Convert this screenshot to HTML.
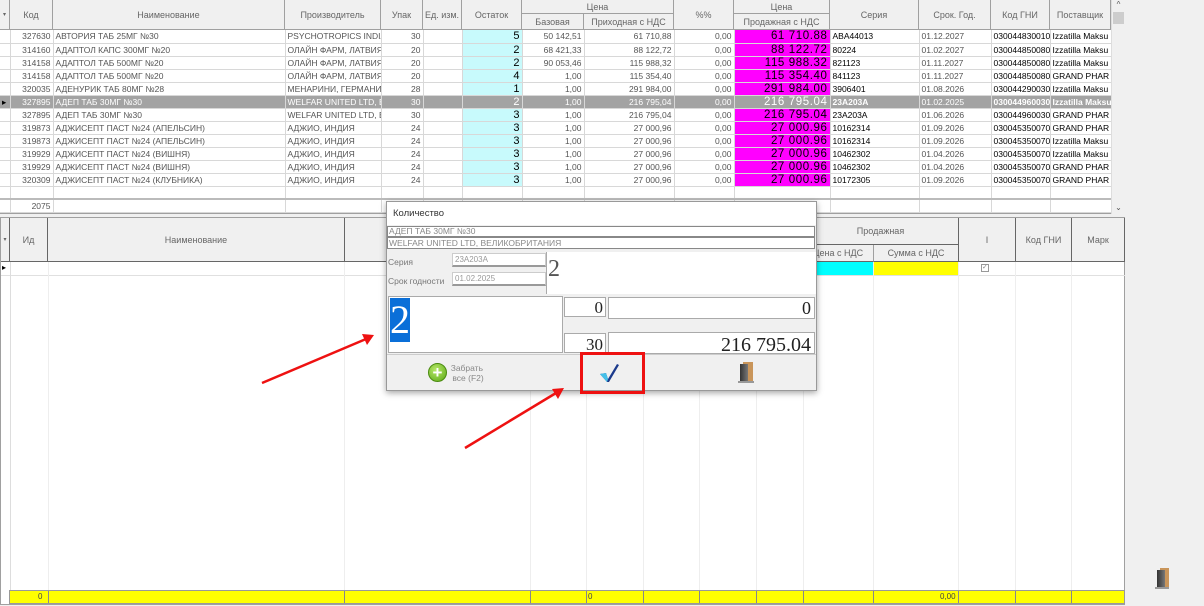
<!DOCTYPE html>
<html><head><meta charset="utf-8"><style>
*{margin:0;padding:0;box-sizing:border-box}
body{width:1204px;height:606px;overflow:hidden;background:#f0f0f0;font-family:"Liberation Sans",sans-serif;font-size:9px;color:#555;position:relative}
.a{position:absolute}
.h{position:absolute;background:#f0f0f0;border-right:1px solid #a0a0a0;border-bottom:1px solid #a0a0a0;display:flex;align-items:center;justify-content:center;color:#666;font-size:9px}
table{border-collapse:collapse;position:absolute;table-layout:fixed}
td{border-right:1px solid #d8d8d8;border-bottom:1px solid #d8d8d8;height:13px;padding:0 2px;white-space:nowrap;overflow:hidden;font-size:8.5px;color:#555;line-height:12px}
td.r{text-align:right}
td.q{background:#c8fafc;text-align:right;color:#000;font-size:11px}
td.m{background:#ff00ff;text-align:right;color:#000;font-size:11.5px;letter-spacing:0.6px}
td.b{color:#000;font-size:8.5px;text-overflow:clip}
tr.s td{background:#a3a3a3;color:#fff}
tr.s td.b{font-weight:bold}
</style></head><body>
<div class="a" style="left:0;top:0;width:1111px;height:214px;background:#fff;border-bottom:2px solid #a0a0a0"></div>
<div class="h" style="left:0;top:0;width:10px;height:30px;font-size:6px">▾</div>
<div class="h" style="left:10px;top:0;width:43px;height:30px">Код</div>
<div class="h" style="left:53px;top:0;width:232px;height:30px">Наименование</div>
<div class="h" style="left:285px;top:0;width:96px;height:30px">Производитель</div>
<div class="h" style="left:381px;top:0;width:42px;height:30px">Упак</div>
<div class="h" style="left:423px;top:0;width:39px;height:30px">Ед. изм.</div>
<div class="h" style="left:462px;top:0;width:60px;height:30px">Остаток</div>
<div class="h" style="left:522px;top:0;width:152px;height:14px">Цена</div>
<div class="h" style="left:522px;top:14px;width:62px;height:16px">Базовая</div>
<div class="h" style="left:584px;top:14px;width:90px;height:16px">Приходная с НДС</div>
<div class="h" style="left:674px;top:0;width:60px;height:30px">%%</div>
<div class="h" style="left:734px;top:0;width:96px;height:14px">Цена</div>
<div class="h" style="left:734px;top:14px;width:96px;height:16px">Продажная с НДС</div>
<div class="h" style="left:830px;top:0;width:89px;height:30px">Серия</div>
<div class="h" style="left:919px;top:0;width:72px;height:30px">Срок. Год.</div>
<div class="h" style="left:991px;top:0;width:59px;height:30px">Код ГНИ</div>
<div class="h" style="left:1050px;top:0;width:61px;height:30px">Поставщик</div>
<table style="left:0;top:30px;width:1111px">
<colgroup><col style="width:10px"><col style="width:43px"><col style="width:232px"><col style="width:96px"><col style="width:42px"><col style="width:39px"><col style="width:60px"><col style="width:62px"><col style="width:90px"><col style="width:60px"><col style="width:96px"><col style="width:89px"><col style="width:72px"><col style="width:59px"><col style="width:61px"></colgroup>
<tr><td></td><td class="r">327630</td><td>АВТОРИЯ ТАБ 25МГ №30</td><td>PSYCHOTROPICS INDIA</td><td class="r">30</td><td></td><td class="q">5</td><td class="r">50 142,51</td><td class="r">61 710,88</td><td class="r">0,00</td><td class="m">61 710.88</td><td class="b">ABA44013</td><td>01.12.2027</td><td class="b">030044830010</td><td class="b">Izzatilla Maksu</td></tr>
<tr><td></td><td class="r">314160</td><td>АДАПТОЛ КАПС 300МГ №20</td><td>ОЛАЙН ФАРМ, ЛАТВИЯ</td><td class="r">20</td><td></td><td class="q">2</td><td class="r">68 421,33</td><td class="r">88 122,72</td><td class="r">0,00</td><td class="m">88 122.72</td><td class="b">80224</td><td>01.02.2027</td><td class="b">030044850080</td><td class="b">Izzatilla Maksu</td></tr>
<tr><td></td><td class="r">314158</td><td>АДАПТОЛ ТАБ 500МГ №20</td><td>ОЛАЙН ФАРМ, ЛАТВИЯ</td><td class="r">20</td><td></td><td class="q">2</td><td class="r">90 053,46</td><td class="r">115 988,32</td><td class="r">0,00</td><td class="m">115 988.32</td><td class="b">821123</td><td>01.11.2027</td><td class="b">030044850080</td><td class="b">Izzatilla Maksu</td></tr>
<tr><td></td><td class="r">314158</td><td>АДАПТОЛ ТАБ 500МГ №20</td><td>ОЛАЙН ФАРМ, ЛАТВИЯ</td><td class="r">20</td><td></td><td class="q">4</td><td class="r">1,00</td><td class="r">115 354,40</td><td class="r">0,00</td><td class="m">115 354.40</td><td class="b">841123</td><td>01.11.2027</td><td class="b">030044850080</td><td class="b">GRAND PHAR</td></tr>
<tr><td></td><td class="r">320035</td><td>АДЕНУРИК ТАБ 80МГ №28</td><td>МЕНАРИНИ, ГЕРМАНИЯ</td><td class="r">28</td><td></td><td class="q">1</td><td class="r">1,00</td><td class="r">291 984,00</td><td class="r">0,00</td><td class="m">291 984.00</td><td class="b">3906401</td><td>01.08.2026</td><td class="b">030044290030</td><td class="b">Izzatilla Maksu</td></tr>
<tr class="s"><td style="color:#000">▸</td><td class="r">327895</td><td>АДЕП ТАБ 30МГ №30</td><td>WELFAR UNITED LTD, E</td><td class="r">30</td><td></td><td class="q">2</td><td class="r">1,00</td><td class="r">216 795,04</td><td class="r">0,00</td><td class="m" style="color:#fff">216 795.04</td><td class="b">23A203A</td><td>01.02.2025</td><td class="b">030044960030</td><td class="b">Izzatilla Maksu</td></tr>
<tr><td></td><td class="r">327895</td><td>АДЕП ТАБ 30МГ №30</td><td>WELFAR UNITED LTD, E</td><td class="r">30</td><td></td><td class="q">3</td><td class="r">1,00</td><td class="r">216 795,04</td><td class="r">0,00</td><td class="m">216 795.04</td><td class="b">23A203A</td><td>01.06.2026</td><td class="b">030044960030</td><td class="b">GRAND PHAR</td></tr>
<tr><td></td><td class="r">319873</td><td>АДЖИСЕПТ ПАСТ №24 (АПЕЛЬСИН)</td><td>АДЖИО, ИНДИЯ</td><td class="r">24</td><td></td><td class="q">3</td><td class="r">1,00</td><td class="r">27 000,96</td><td class="r">0,00</td><td class="m">27 000.96</td><td class="b">10162314</td><td>01.09.2026</td><td class="b">030045350070</td><td class="b">GRAND PHAR</td></tr>
<tr><td></td><td class="r">319873</td><td>АДЖИСЕПТ ПАСТ №24 (АПЕЛЬСИН)</td><td>АДЖИО, ИНДИЯ</td><td class="r">24</td><td></td><td class="q">3</td><td class="r">1,00</td><td class="r">27 000,96</td><td class="r">0,00</td><td class="m">27 000.96</td><td class="b">10162314</td><td>01.09.2026</td><td class="b">030045350070</td><td class="b">Izzatilla Maksu</td></tr>
<tr><td></td><td class="r">319929</td><td>АДЖИСЕПТ ПАСТ №24 (ВИШНЯ)</td><td>АДЖИО, ИНДИЯ</td><td class="r">24</td><td></td><td class="q">3</td><td class="r">1,00</td><td class="r">27 000,96</td><td class="r">0,00</td><td class="m">27 000.96</td><td class="b">10462302</td><td>01.04.2026</td><td class="b">030045350070</td><td class="b">Izzatilla Maksu</td></tr>
<tr><td></td><td class="r">319929</td><td>АДЖИСЕПТ ПАСТ №24 (ВИШНЯ)</td><td>АДЖИО, ИНДИЯ</td><td class="r">24</td><td></td><td class="q">3</td><td class="r">1,00</td><td class="r">27 000,96</td><td class="r">0,00</td><td class="m">27 000.96</td><td class="b">10462302</td><td>01.04.2026</td><td class="b">030045350070</td><td class="b">GRAND PHAR</td></tr>
<tr><td></td><td class="r">320309</td><td>АДЖИСЕПТ ПАСТ №24 (КЛУБНИКА)</td><td>АДЖИО, ИНДИЯ</td><td class="r">24</td><td></td><td class="q">3</td><td class="r">1,00</td><td class="r">27 000,96</td><td class="r">0,00</td><td class="m">27 000.96</td><td class="b">10172305</td><td>01.09.2026</td><td class="b">030045350070</td><td class="b">GRAND PHAR</td></tr>
<tr><td style="height:13px;border-bottom:2px solid #bbb"></td><td style="border-bottom:2px solid #bbb"></td><td style="border-bottom:2px solid #bbb"></td><td style="border-bottom:2px solid #bbb"></td><td style="border-bottom:2px solid #bbb"></td><td style="border-bottom:2px solid #bbb"></td><td style="border-bottom:2px solid #bbb"></td><td style="border-bottom:2px solid #bbb"></td><td style="border-bottom:2px solid #bbb"></td><td style="border-bottom:2px solid #bbb"></td><td style="border-bottom:2px solid #bbb"></td><td style="border-bottom:2px solid #bbb"></td><td style="border-bottom:2px solid #bbb"></td><td style="border-bottom:2px solid #bbb"></td><td style="border-bottom:2px solid #bbb"></td></tr>
<tr><td></td><td class="r">2075</td><td></td><td></td><td></td><td></td><td></td><td></td><td></td><td></td><td></td><td></td><td></td><td></td><td></td></tr>
</table>
<div class="a" style="left:1111px;top:0;width:14px;height:214px;background:#f0f0f0;border-left:1px solid #ddd;font-size:8px;color:#555;text-align:center">^<div style="position:absolute;top:12px;left:1px;width:11px;height:12px;background:#cdcdcd"></div><div style="position:absolute;bottom:2px;width:13px">⌄</div></div>
<div class="a" style="left:0;top:217px;width:1125px;height:388px;background:#fff;border:1px solid #a0a0a0"></div>
<div class="h" style="left:1px;top:218px;width:9px;height:44px;font-size:6px;border-right:1px solid #666;border-bottom:1px solid #666">▾</div>
<div class="h" style="left:10px;top:218px;width:38px;height:44px;border-right:1px solid #666;border-bottom:1px solid #666">Ид</div>
<div class="h" style="left:48px;top:218px;width:297px;height:44px;border-right:1px solid #666;border-bottom:1px solid #666">Наименование</div>
<div class="h" style="left:345px;top:218px;width:458px;height:44px;border-bottom:1px solid #666"></div>
<div class="h" style="left:803px;top:218px;width:156px;height:27px;border-right:1px solid #666;border-bottom:1px solid #666">Продажная</div>
<div class="h" style="left:803px;top:245px;width:71px;height:17px;border-bottom:1px solid #666">Цена с НДС</div>
<div class="h" style="left:874px;top:245px;width:85px;height:17px;border-right:1px solid #666;border-bottom:1px solid #666">Сумма с НДС</div>
<div class="h" style="left:959px;top:218px;width:57px;height:44px;border-right:1px solid #666;border-bottom:1px solid #666">I</div>
<div class="h" style="left:1016px;top:218px;width:56px;height:44px;border-right:1px solid #666;border-bottom:1px solid #666">Код ГНИ</div>
<div class="h" style="left:1072px;top:218px;width:53px;height:44px;border-right:1px solid #666;border-bottom:1px solid #666">Марк</div>
<div class="a" style="left:803px;top:262px;width:71px;height:13px;background:#00ffff"></div>
<div class="a" style="left:874px;top:262px;width:85px;height:13px;background:#ffff00"></div>
<div class="a" style="left:981px;top:264px;width:8px;height:8px;border:1px solid #999;font-size:7px;line-height:6px;color:#888">✓</div>
<div class="a" style="left:2px;top:263px;font-size:8px;color:#000">▸</div>
<div class="a" style="left:1px;top:275px;width:1124px;border-top:1px solid #e0e0e0"></div>
<div class="a" style="left:1px;top:262px;height:328px;width:1124px;background:
linear-gradient(#ddd,#ddd) 9px 0/1px 100% no-repeat,
linear-gradient(#eee,#eee) 47px 0/1px 100% no-repeat,
linear-gradient(#eee,#eee) 343px 0/1px 100% no-repeat,
linear-gradient(#eee,#eee) 529px 0/1px 100% no-repeat,
linear-gradient(#eee,#eee) 585px 0/1px 100% no-repeat,
linear-gradient(#eee,#eee) 642px 0/1px 100% no-repeat,
linear-gradient(#eee,#eee) 698px 0/1px 100% no-repeat,
linear-gradient(#eee,#eee) 755px 0/1px 100% no-repeat,
linear-gradient(#eee,#eee) 802px 0/1px 100% no-repeat,
linear-gradient(#eee,#eee) 872px 0/1px 100% no-repeat,
linear-gradient(#eee,#eee) 957px 0/1px 100% no-repeat,
linear-gradient(#eee,#eee) 1014px 0/1px 100% no-repeat,
linear-gradient(#eee,#eee) 1070px 0/1px 100% no-repeat"></div>
<div class="a" style="left:9px;top:590px;width:1116px;height:14px;background:#ffff00;border:1px solid #999;background-image:
linear-gradient(#888,#888),linear-gradient(#888,#888),linear-gradient(#888,#888),linear-gradient(#888,#888),linear-gradient(#888,#888),linear-gradient(#888,#888),linear-gradient(#888,#888),linear-gradient(#888,#888),linear-gradient(#888,#888),linear-gradient(#888,#888),linear-gradient(#888,#888),linear-gradient(#888,#888);
background-size:1px 100%;background-repeat:no-repeat;background-position:38px 0,334px 0,520px 0,576px 0,633px 0,689px 0,746px 0,793px 0,863px 0,948px 0,1005px 0,1061px 0"></div>
<div class="a" style="left:38px;top:592px;font-size:8px;color:#444">0</div>
<div class="a" style="left:588px;top:592px;font-size:8px;color:#444">0</div>
<div class="a" style="left:940px;top:592px;font-size:8px;color:#444">0,00</div>
<div class="a" style="left:1160px;top:568px;width:9px;height:20px;background:#c9955a"></div>
<div class="a" style="left:1157px;top:570px;width:8px;height:18px;background:linear-gradient(90deg,#333,#777)"></div>
<div class="a" style="left:1155px;top:587px;width:14px;height:2px;background:#999"></div>
<div class="a" style="left:386px;top:201px;width:431px;height:190px;background:#f0f0f0;border:1px solid #999;box-shadow:0 2px 6px rgba(0,0,0,.35)"></div>
<div class="a" style="left:387px;top:202px;width:429px;height:23px;background:#fff"></div>
<div class="a" style="left:393px;top:208px;font-size:9.5px;color:#333">Количество</div>
<div class="a" style="left:387px;top:226px;width:428px;height:11px;background:#fff;border:1px solid #888;font-size:8.5px;line-height:9px;color:#888;padding-left:1px">АДЕП ТАБ 30МГ №30</div>
<div class="a" style="left:387px;top:237px;width:428px;height:12px;background:#fff;border:1px solid #888;font-size:8.5px;line-height:10px;color:#888;padding-left:1px">WELFAR UNITED LTD, ВЕЛИКОБРИТАНИЯ</div>
<div class="a" style="left:388px;top:257px;font-size:8.5px;color:#777">Серия</div>
<div class="a" style="left:388px;top:276px;font-size:8.5px;color:#777">Срок годности</div>
<div class="a" style="left:452px;top:253px;width:94px;height:14px;background:#fff;border:1px solid #ccc;border-bottom:2px solid #999;font-size:8px;color:#999;padding:1px 2px">23A203A</div>
<div class="a" style="left:452px;top:272px;width:94px;height:14px;background:#fff;border:1px solid #ccc;border-bottom:2px solid #999;font-size:8px;color:#999;padding:1px 2px">01.02.2025</div>
<div class="a" style="left:546px;top:252px;width:270px;height:42px;background:#fff;border-left:1px solid #aaa;font-family:'Liberation Serif',serif;font-size:24px;color:#555;line-height:34px;padding-left:1px">2</div>
<div class="a" style="left:388px;top:296px;width:175px;height:57px;background:#fff;border:1px solid #aaa"></div>
<div class="a" style="left:390px;top:298px;width:20px;height:44px;background:#0a6fd8;color:#fff;font-family:'Liberation Serif',serif;font-size:40px;line-height:44px;text-align:center">2</div>
<div class="a" style="left:564px;top:297px;width:42px;height:20px;background:#fff;border:1px solid #aaa;font-family:'Liberation Serif',serif;font-size:17px;text-align:right;padding-right:2px;color:#222;line-height:19px">0</div>
<div class="a" style="left:608px;top:297px;width:207px;height:22px;background:#fff;border:1px solid #aaa;font-family:'Liberation Serif',serif;font-size:18px;text-align:right;padding-right:3px;color:#222;line-height:21px">0</div>
<div class="a" style="left:564px;top:333px;width:42px;height:20px;background:#fff;border:1px solid #aaa;font-family:'Liberation Serif',serif;font-size:17px;text-align:right;padding-right:2px;color:#222;line-height:22px">30</div>
<div class="a" style="left:608px;top:332px;width:207px;height:22px;background:#fff;border:1px solid #aaa;font-family:'Liberation Serif',serif;font-size:20px;text-align:right;padding-right:3px;color:#222;line-height:24px">216 795.04</div>
<div class="a" style="left:387px;top:354px;width:429px;border-top:1px solid #ccc"></div>
<div class="a" style="left:428px;top:363px;width:19px;height:19px;border-radius:50%;background:radial-gradient(circle at 40% 35%,#b8e86a,#5aa814);border:1px solid #4a8a10;color:#fff;font-size:17px;font-weight:bold;line-height:17px;text-align:center">+</div>
<div class="a" style="left:450px;top:363px;font-size:8.5px;color:#888;line-height:10px;text-align:center">Забрать<br>&nbsp;все (F2)</div>
<svg class="a" style="left:598px;top:362px" width="24" height="22" viewBox="0 0 24 22"><path d="M2 12 L8 11 L10 17 L19 2 L21 3 L11 20 L9 20 Z" fill="#1b3a8c"/><path d="M2 12 L8 11 L10 17 L9 20 Z" fill="#45c0e8"/></svg>
<div class="a" style="left:743px;top:362px;width:10px;height:20px;background:#c9955a"></div>
<div class="a" style="left:740px;top:364px;width:8px;height:18px;background:linear-gradient(90deg,#333,#777)"></div>
<div class="a" style="left:738px;top:381px;width:16px;height:2px;background:#999"></div>
<div class="a" style="left:580px;top:352px;width:65px;height:42px;border:3px solid #ee1111"></div>
<svg class="a" style="left:0;top:0" width="1204" height="606"><g stroke="#ee1111" stroke-width="2.5" fill="#ee1111"><line x1="262" y1="383" x2="366" y2="339"/><path d="M374 335 L362 334 L367 345 Z" stroke="none"/><line x1="465" y1="448" x2="556" y2="393"/><path d="M564 388 L552 389 L558 399 Z" stroke="none"/></g></svg>
</body></html>
